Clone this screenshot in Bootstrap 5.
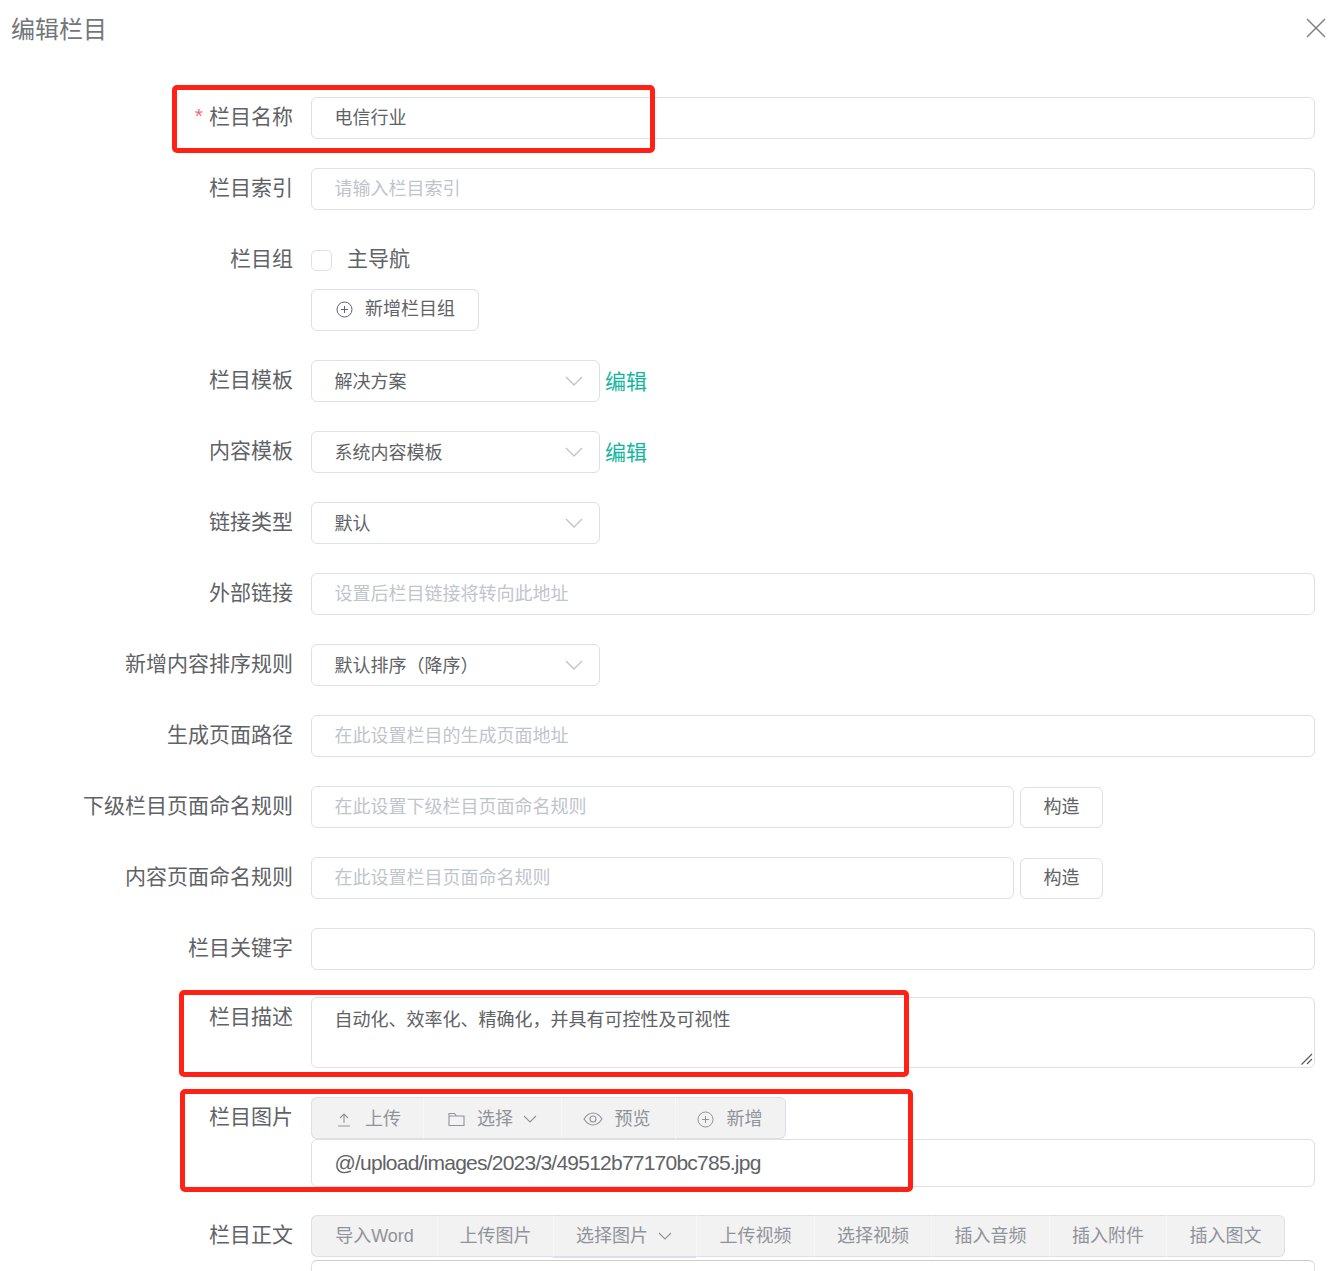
<!DOCTYPE html>
<html lang="zh-CN">
<head>
<meta charset="utf-8">
<title>编辑栏目</title>
<link rel="stylesheet" href="https://cdn.jsdelivr.net/npm/bootstrap@5.3.0/dist/css/bootstrap.min.css">
<style>
html,body{height:1271px;overflow:hidden;background:#fff}
body{position:relative;font-family:"Liberation Sans","Noto Sans CJK SC",sans-serif;color:#606266}
.dlg-head{height:97px;padding:12px 17px 0 11px;align-items:flex-start}
.dlg-title{font-size:24px;line-height:36px;color:#72767b;font-weight:400;margin:0}
.dlg-close{width:20px;height:20px;margin-top:6px;padding:0;border:0;background:none;line-height:0}
.dlg-form{padding-right:28px}
.frow{margin-bottom:29px}
.frow-tight{margin-bottom:27px}
.frow-mid{margin-bottom:28px}
.flabel{flex:0 0 293px;text-align:right;font-size:21px;line-height:40px;color:#606266;margin:0}
.req{color:#f56c6c;font-size:21px;margin-right:6px;position:relative;top:-1px}
.ffield{flex:1 1 auto;min-width:0;margin-left:18px}
.ffield.fixw{flex:0 0 792px;width:792px}
.form-control.fin,.form-select.fsel{height:42px;font-size:18px;line-height:24px;color:#606266;border:1px solid #dcdfe6;border-radius:6px;padding:8px 22.5px;box-shadow:none}
.form-control.fin::placeholder{color:#c0c4cc;opacity:1}
.form-control.fval{padding-top:6px;padding-bottom:10px}
.form-select.fsel{flex:0 0 289px;width:289px;padding:9px 40px 7px 22.5px;background-size:18px 10px;background-position:right 16px center;background-image:url("data:image/svg+xml,%3Csvg xmlns='http://www.w3.org/2000/svg' viewBox='0 0 18 10'%3E%3Cpath d='M1 1l8 8 8-8' fill='none' stroke='%23c0c4cc' stroke-width='1.4'/%3E%3C/svg%3E")}
.form-control.farea{height:71px;padding-top:10px;resize:none}
.grip{position:absolute;right:2px;bottom:2px;display:block;pointer-events:none}
.form-control.fpath{height:48px;font-size:21px;letter-spacing:-.77px}
.edit-lnk{font-size:21px;height:42px;line-height:44px;color:#13b5a0;text-decoration:none;margin-left:5px}
.chk{width:21px;height:21px;margin:0;border:1px solid #dcdfe6;border-radius:3px;box-shadow:none}
.chk-row{height:42px;margin-bottom:8px;gap:15px;font-size:21px;line-height:38px;color:#606266}
.chk-txt{margin-top:-2px}
.btn.plain{height:42px;font-size:18px;line-height:24px;color:#606266;background:#fff;border:1px solid #dcdfe6;border-radius:6px;padding:7px 23px 9px 24px;display:inline-flex;align-items:center;gap:12px}
.btn.plain.w-make{margin:1px 0 0 6px;height:41px;flex:0 0 83px;justify-content:center;padding:6px 0 8px}
.tools{display:flex;width:max-content}
.tools .btn{height:42px;font-size:18px;line-height:24px;color:#909399;background:#f2f2f2;border:1px solid #dcdfe6;border-left-color:#f7f7f7;border-right:0;border-radius:0;padding:8px 0;display:inline-flex;align-items:center;justify-content:center;gap:10px}
.tools .btn:first-child{border-left-color:#dcdfe6;border-radius:6px 0 0 6px}
.tools .btn:last-child{border-right:1px solid #dcdfe6;border-radius:0 6px 6px 0}
.imgtools .btn{padding-top:9px;padding-bottom:7px}
.t1{width:112px;gap:15px!important}.t1 .ico{margin:0 -2px 0 2px}
.t2{width:138px}.t2 .ico:first-child{margin-right:2px}
.t3{width:114px;gap:12px!important;padding-right:4px!important}
.t4{width:111px;gap:13px!important;padding-right:2px!important}
.u1{width:126px}.u2{width:116px}.u3{width:143px;padding-right:2px!important}.u4{width:118px}.u5{width:117px}.u6{width:118px}.u7{width:117px}.u8{width:119px}
.tools .ddb{box-shadow:0 1px 0 #dcdfe6}
.ico{flex:none;display:block}
.form-control.edbox{height:60px;margin-top:3px;border:1px solid #dcdfe6;border-top-color:#ccc;border-radius:6px}
.redbox{position:absolute;border:5px solid #ff2116;border-radius:5px;pointer-events:none}
.rb1{left:172px;top:85px;width:483px;height:68px}
.rb2{left:179px;top:990px;width:730px;height:87px}
.rb3{left:180px;top:1089px;width:733px;height:103px}
</style>
</head>
<body>
<div class="d-flex justify-content-between dlg-head">
  <h5 class="dlg-title">编辑栏目</h5>
  <button class="dlg-close" type="button" aria-label="关闭"><svg width="20" height="20" viewBox="0 0 20 20"><path d="M1 1l18 18M19 1L1 19" stroke="#7d8085" stroke-width="1.5" fill="none"/></svg></button>
</div>
<form class="dlg-form">
  <div class="d-flex frow"><label class="flabel"><span class="req">*</span>栏目名称</label><div class="ffield"><input class="form-control fin fval" value="电信行业"></div></div>
  <div class="d-flex frow"><label class="flabel">栏目索引</label><div class="ffield"><input class="form-control fin" placeholder="请输入栏目索引"></div></div>
  <div class="d-flex frow"><label class="flabel">栏目组</label><div class="ffield">
    <div class="d-flex align-items-center chk-row"><input class="form-check-input chk" type="checkbox"><span class="chk-txt">主导航</span></div>
    <button type="button" class="btn plain"><svg class="ico" width="17" height="17" viewBox="0 0 17 17"><circle cx="8.5" cy="8.5" r="7.5" fill="none" stroke="#606266" stroke-width="1"/><path d="M8.500 5v7M5 8.500h7" stroke="#606266" stroke-width="1"/></svg>新增栏目组</button>
  </div></div>
  <div class="d-flex frow"><label class="flabel">栏目模板</label><div class="ffield d-flex"><select class="form-select fsel"><option>解决方案</option></select><a class="edit-lnk" href="#">编辑</a></div></div>
  <div class="d-flex frow"><label class="flabel">内容模板</label><div class="ffield d-flex"><select class="form-select fsel"><option>系统内容模板</option></select><a class="edit-lnk" href="#">编辑</a></div></div>
  <div class="d-flex frow"><label class="flabel">链接类型</label><div class="ffield d-flex"><select class="form-select fsel"><option>默认</option></select></div></div>
  <div class="d-flex frow"><label class="flabel">外部链接</label><div class="ffield"><input class="form-control fin" placeholder="设置后栏目链接将转向此地址"></div></div>
  <div class="d-flex frow"><label class="flabel">新增内容排序规则</label><div class="ffield d-flex"><select class="form-select fsel"><option>默认排序（降序）</option></select></div></div>
  <div class="d-flex frow"><label class="flabel">生成页面路径</label><div class="ffield"><input class="form-control fin" placeholder="在此设置栏目的生成页面地址"></div></div>
  <div class="d-flex frow"><label class="flabel">下级栏目页面命名规则</label><div class="ffield fixw d-flex"><input class="form-control fin" placeholder="在此设置下级栏目页面命名规则"><button type="button" class="btn plain w-make">构造</button></div></div>
  <div class="d-flex frow"><label class="flabel">内容页面命名规则</label><div class="ffield fixw d-flex"><input class="form-control fin" placeholder="在此设置栏目页面命名规则"><button type="button" class="btn plain w-make">构造</button></div></div>
  <div class="d-flex frow-tight"><label class="flabel">栏目关键字</label><div class="ffield"><input class="form-control fin"></div></div>
  <div class="d-flex frow"><label class="flabel">栏目描述</label><div class="ffield position-relative"><textarea class="form-control fin farea">自动化、效率化、精确化，并具有可控性及可视性</textarea><svg class="grip" width="13" height="13" viewBox="0 0 13 13"><path d="M12 1L1.500 11.500M12 6L7 11" stroke="#555" stroke-width="1.100" fill="none"/></svg></div></div>
  <div class="d-flex frow-mid"><label class="flabel">栏目图片</label><div class="ffield">
    <div class="tools imgtools">
      <button type="button" class="btn t1"><svg class="ico" width="16" height="16" viewBox="0 0 16 16"><path d="M8 12V3M4 7l4-4 4 4M2 15h12" fill="none" stroke="#909399" stroke-width="1.1"/></svg>上传</button>
      <button type="button" class="btn t2"><svg class="ico" width="17" height="15" viewBox="0 0 17 15"><path d="M1 13.500V1.500h5.500l2 2.500h7.500v9.500zM1 4h7.500" fill="none" stroke="#909399" stroke-width="1.1"/></svg>选择<svg class="ico" width="14" height="8" viewBox="0 0 14 8"><path d="M1 1l6 6 6-6" fill="none" stroke="#909399" stroke-width="1.1"/></svg></button>
      <button type="button" class="btn t3"><svg class="ico" width="20" height="14" viewBox="0 0 20 14"><path d="M1 7c2.500-4 5.500-6 9-6s6.500 2 9 6c-2.500 4-5.500 6-9 6s-6.500-2-9-6z" fill="none" stroke="#909399" stroke-width="1.1"/><circle cx="10" cy="7" r="3" fill="none" stroke="#909399" stroke-width="1.1"/></svg>预览</button>
      <button type="button" class="btn t4"><svg class="ico" width="17" height="17" viewBox="0 0 17 17"><circle cx="8.500" cy="8.500" r="7.500" fill="none" stroke="#909399"/><path d="M8.500 5v7M5 8.500h7" stroke="#909399"/></svg>新增</button>
    </div>
    <input class="form-control fin fpath" value="@/upload/images/2023/3/49512b77170bc785.jpg">
  </div></div>
  <div class="d-flex"><label class="flabel">栏目正文</label><div class="ffield">
    <div class="tools">
      <button type="button" class="btn u1">导入Word</button>
      <button type="button" class="btn u2">上传图片</button>
      <button type="button" class="btn u3 ddb">选择图片<svg class="ico" width="14" height="8" viewBox="0 0 14 8"><path d="M1 1l6 6 6-6" fill="none" stroke="#909399" stroke-width="1.1"/></svg></button>
      <button type="button" class="btn u4">上传视频</button>
      <button type="button" class="btn u5">选择视频</button>
      <button type="button" class="btn u6">插入音频</button>
      <button type="button" class="btn u7">插入附件</button>
      <button type="button" class="btn u8">插入图文</button>
    </div>
    <div class="form-control edbox"></div>
  </div></div>
</form>
<div class="redbox rb1"></div>
<div class="redbox rb2"></div>
<div class="redbox rb3"></div>
<script src="https://cdn.jsdelivr.net/npm/bootstrap@5.3.0/dist/js/bootstrap.bundle.min.js"></script>
</body>
</html>
